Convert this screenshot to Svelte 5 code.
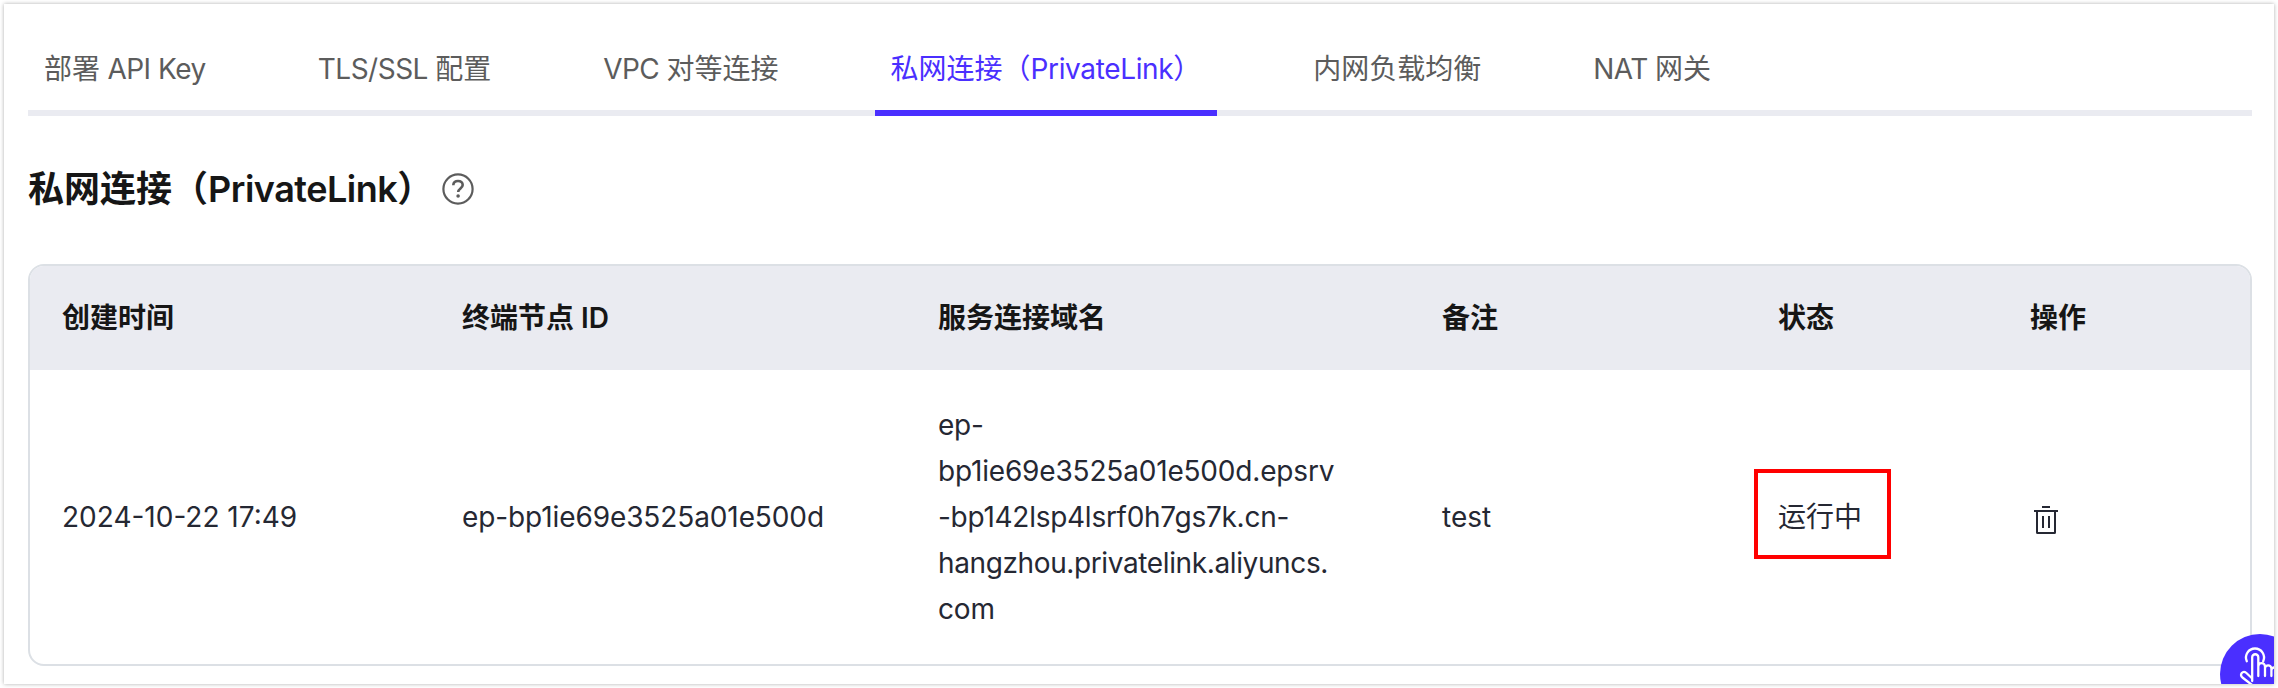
<script>
  // `spacing` tightens the Latin runs of a label, in px
  const tabs = [
    { label: '部署 API Key', spacing: -0.5 },
    { label: 'TLS/SSL 配置', spacing: -0.5 },
    { label: 'VPC 对等连接', spacing: -0.6 },
    { label: '私网连接（PrivateLink）', spacing: -0.36 },
    { label: '内网负载均衡', spacing: 0 },
    { label: 'NAT 网关', spacing: -0.6 }
  ];
  const active = 3;
  const columns = ['创建时间', '终端节点 ID', '服务连接域名', '备注', '状态', '操作'];
  const domain = [
    { text: 'ep-', spacing: -0.2 },
    { text: 'bp1ie69e3525a01e500d.epsrv', spacing: -0.18 },
    { text: '-bp142lsp4lsrf0h7gs7k.cn-', spacing: -0.27 },
    { text: 'hangzhou.privatelink.aliyuncs.', spacing: -0.38 },
    { text: 'com', spacing: -0.2 }
  ];
  const runs = (text) => text.match(/[\x20-\x7e]+|[^\x20-\x7e]+/g);
  const isLatin = (run) => /^[\x20-\x7e]/.test(run);
</script>

{#snippet mixed(text, spacing)}{#each runs(text) as run}<span style:letter-spacing={isLatin(run) ? `${spacing}px` : null}>{run}</span>{/each}{/snippet}

<main class="panel">
  <nav class="tabs">
    {#each tabs as tab, i}
      <div class="tab" class:active={i === active}>{@render mixed(tab.label, tab.spacing)}</div>
    {/each}
  </nav>

  <header class="title">
    <h1>{@render mixed('私网连接（PrivateLink）', -0.5)}</h1>
    <svg class="help" width="32" height="32" viewBox="0 0 32 32" fill="none" stroke="#5c5c5c" stroke-width="2.2">
      <circle cx="16" cy="16" r="14.6" />
      <path d="M11.3 12.3C11.3 9.5 13.300 8 16 8s4.700 1.600 4.700 4.100c0 3.300-4.500 3.600-4.500 7" stroke-width="2.600" />
      <circle cx="16.100" cy="23" r="1.800" fill="#5c5c5c" stroke="none" />
    </svg>
  </header>

  <section class="table">
    <div class="row head">
      {#each columns as column}
        <div>{column}</div>
      {/each}
    </div>
    <div class="row body">
      <div>2024-10-22 17:49</div>
      <div class="endpoint">ep-bp1ie69e3525a01e500d</div>
      <div>
        {#each domain as line}
          <span class="line" style:letter-spacing="{line.spacing}px">{line.text}</span>
        {/each}
      </div>
      <div>test</div>
      <div class="status">运行中<span class="mark"></span></div>
      <div class="action">
        <svg width="32" height="32" viewBox="0 0 32 32" fill="none" stroke="#252833" stroke-width="2">
          <path d="M12 3h8M4 7h24M7 8v20.500q0 .5.5.5h17q.5 0 .5-.5V8M13 12v12M19 12v12" />
        </svg>
      </div>
    </div>
  </section>

  <div class="fab">
    <svg width="44" height="44" viewBox="0 0 44 44" fill="none" stroke="#fff" stroke-width="2.3" stroke-linecap="round" stroke-linejoin="round">
      <path d="M8.8 15.200a9 9 0 1 1 16.400 0" />
      <path d="M14.200 35V11.300a3.050 3.050 0 0 1 6.100 0V30M20.300 20.500a3.350 3.350 0 0 1 6.700 0V30M27 22.500a3.200 3.200 0 0 1 6.400 0V30M33.400 24.500a3 3 0 0 1 6 0v9.500c0 5-4 9-9 9h-7c-4 0-6-1-8-3l-11-8.500c-3.500-3 .5-7.500 4-4.500l5.800 5.500" />
    </svg>
  </div>
</main>

<style>
  :global(body) { background: #fff; }
  .panel {
    box-sizing: border-box;
    position: relative;
    width: 2270px;
    height: 680px;
    margin: 4px;
    padding: 20px 22px 0 24px;
    overflow: hidden;
    background: #fff;
    box-shadow: 0 0 4px rgba(0, 0, 0, 0.32);
    font-family: Inter, 'Noto Sans CJK SC', sans-serif;
    font-size: 28px;
    color: #252833;
    display: flow-root;
  }
  .tabs {
    display: flex;
    gap: 80px;
    height: 92px;
    box-shadow: inset 0 -6px #eaebf1;
    color: #5c5c5c;
  }
  .tab {
    box-sizing: border-box;
    padding: 0 16px;
    line-height: 90px;
    height: 92px;
    white-space: pre;
  }
  .active {
    color: #4a2fff;
    box-shadow: inset 0 -6px #4a2fff;
  }
  .title {
    display: flex;
    align-items: center;
    gap: 9px;
    height: 60px;
    margin-top: 43px;
  }
  h1 {
    margin: 0;
    font-size: 36px;
    font-weight: 600;
    line-height: 60px;
    color: #161616;
    white-space: nowrap;
  }
  .table {
    box-sizing: border-box;
    height: 402px;
    margin-top: 45px;
    border: 2px solid #dce0e5;
    border-radius: 16px;
    overflow: hidden;
  }
  .row {
    display: grid;
    grid-template-columns: 400px 476px 504px 336px 252px 1fr;
    padding-left: 32px;
    align-items: center;
    white-space: nowrap;
    line-height: 46px;
  }
  .head {
    height: 104px;
    background: #eaebf1;
    font-weight: 600;
    color: #161616;
  }
  .body { height: 294px; }
  .endpoint { letter-spacing: -0.1px; }
  .line { display: block; }
  .status { position: relative; }
  .mark {
    position: absolute;
    left: -24px;
    top: -25px;
    width: 129px;
    height: 82px;
    border: 4px solid #f00;
  }
  .action {
    display: flex;
    padding-top: 6px;
  }
  .fab {
    position: absolute;
    left: 2216px;
    top: 630px;
    width: 80px;
    height: 80px;
    border-radius: 50%;
    background: #4a2fff;
  }
  .fab svg {
    display: block;
    margin: 12px 0 0 18px;
  }
</style>
